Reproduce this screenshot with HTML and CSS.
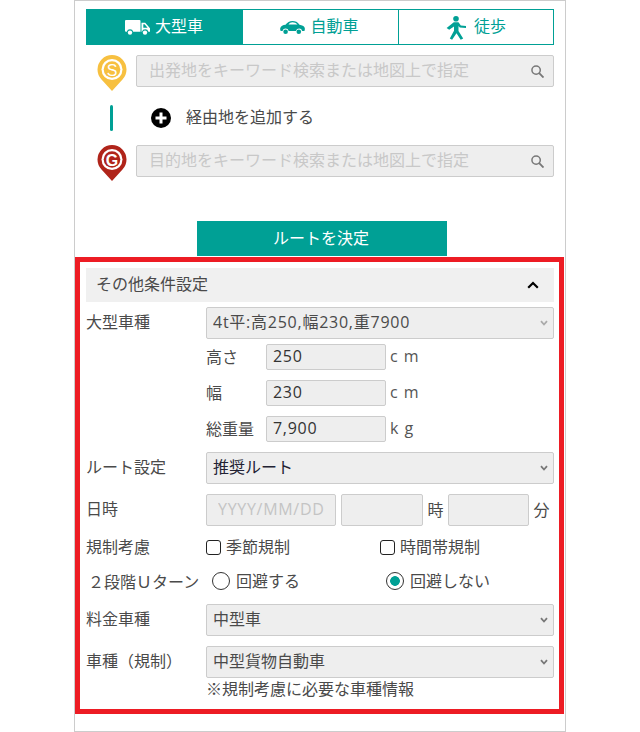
FILE: index.html
```html
<!DOCTYPE html>
<html lang="ja">
<head>
<meta charset="utf-8">
<title>ルート検索</title>
<link rel="stylesheet" href="styles.css">
</head>
<body>
<main class="panel">
  <div class="search">
    <nav class="tabs">
      <a class="tab tab-active">
        <svg class="ico-truck" viewBox="0 0 25 15"><path fill="currentColor" d="M1 0h13.500a1 1 0 0 1 1 1v10.800H8.200a3.300 3.300 0 0 0-6.400 0H1a1 1 0 0 1-1-1V1a1 1 0 0 1 1-1z"/><path fill="currentColor" fill-rule="evenodd" d="M16.500 2.800h3.700l4.800 5.400v3.600h-1.600a3.300 3.300 0 0 0-6.400 0h-.5zM18.300 4.200v3.600h4.300l-3-3.600z"/><circle fill="currentColor" cx="5" cy="12.600" r="2.200"/><circle fill="currentColor" cx="20" cy="12.600" r="2.200"/></svg>
        <span>大型車</span>
      </a>
      <a class="tab tab-mid">
        <svg class="ico-car" viewBox="0 0 25 14"><path fill="currentColor" fill-rule="evenodd" d="M.3 7C.8 5 3 4.100 5.500 3.800 7.300 1.300 9.500 0 12.500 0c3 0 5 1 7 3.700 2.500.4 4.500 1.200 5.200 3 .3 1 .2 2.500-.3 3.300h-2.200a3.200 3.200 0 0 0-6.200 0H8.700a3.200 3.200 0 0 0-6.200 0H.8C.2 9.300 0 8 .3 7zM8.500 3.600h9C16 2 14.500 1.300 12.500 1.300 10.900 1.300 9.500 2 8.500 3.600z"/><circle fill="currentColor" cx="5.600" cy="10.800" r="2.300"/><circle fill="currentColor" cx="18.800" cy="10.800" r="2.300"/></svg>
        <span>自動車</span>
      </a>
      <a class="tab tab-walk">
        <svg class="ico-walk" viewBox="0 0 20 24"><circle fill="currentColor" cx="10" cy="2.800" r="2.800"/><path fill="currentColor" d="M7.800 6.300h4.700l2.300 3.200 5.200.5v2l-6.200-.6-1.300-1.500v5l4.700 7.500-2.500 1.300-4.200-6.500-4.400 6.600-2.300-1.400 4.200-7.600V10.500l-4.800 3.300L.6 12z"/></svg>
        <span>徒歩</span>
      </a>
    </nav>

    <div class="place place-start">
      <svg class="pin" viewBox="0 0 30 36"><path fill="#f7c040" d="M15 36 4.500 24.500A14.500 14.500 0 1 1 25.500 24.500z"/><circle cx="15" cy="14.500" r="10.500" fill="#fff"/><circle cx="15" cy="14.500" r="8.300" fill="#f7c040"/><text x="15" y="20.500" class="pin-letter">S</text></svg>
      <div class="field">
        <input class="field-input" placeholder="出発地をキーワード検索または地図上で指定" disabled>
        <svg class="ico-search" viewBox="0 0 14 14"><circle cx="5.500" cy="5.500" r="4.500" fill="none" stroke="#777" stroke-width="1.600"/><path d="m8.800 8.800 4.700 4.700" stroke="#777" stroke-width="2"/></svg>
      </div>
    </div>

    <div class="via">
      <span class="via-bar"></span>
      <svg class="ico-plus" viewBox="0 0 20 20"><circle cx="10" cy="10" r="10" fill="#000"/><path d="M10 4.500v11M4.500 10h11" stroke="#fff" stroke-width="3"/></svg>
      <span class="via-text">経由地を追加する</span>
    </div>

    <div class="place place-goal">
      <svg class="pin" viewBox="0 0 30 36"><path fill="#b0241a" d="M15 36 4.500 24.500A14.500 14.500 0 1 1 25.500 24.500z"/><circle cx="15" cy="14.500" r="10.500" fill="#fff"/><circle cx="15" cy="14.500" r="8.300" fill="#b0241a"/><text x="15" y="20.500" class="pin-letter">G</text></svg>
      <div class="field">
        <input class="field-input" placeholder="目的地をキーワード検索または地図上で指定" disabled>
        <svg class="ico-search" viewBox="0 0 14 14"><circle cx="5.500" cy="5.500" r="4.500" fill="none" stroke="#777" stroke-width="1.600"/><path d="m8.800 8.800 4.700 4.700" stroke="#777" stroke-width="2"/></svg>
      </div>
    </div>

    <button class="decide" type="button">ルートを決定</button>
  </div>

  <section class="conditions">
    <header class="cond-head">
      <span>その他条件設定</span>
      <svg class="ico-up" viewBox="0 0 12 8"><path d="M1.200 6.800 6 2l4.800 4.800" fill="none" stroke="#000" stroke-width="2.200"/></svg>
    </header>

    <div class="row row-first">
      <label class="row-label">大型車種</label>
      <div class="select-wrap">
        <select class="select select-latin"><option>4t平:高250,幅230,重7900</option></select>
        <svg class="ico-down ico-down-light" viewBox="0 0 8 6"><path d="M1 1.200 4 4.500l3-3.300" fill="none" stroke="currentColor" stroke-width="1.800"/></svg>
      </div>
    </div>

    <div class="size-list">
      <div class="size"><span class="size-label">高さ</span><input class="size-input" value="250"><span class="unit">c m</span></div>
      <div class="size"><span class="size-label">幅</span><input class="size-input" value="230"><span class="unit">c m</span></div>
      <div class="size"><span class="size-label">総重量</span><input class="size-input" value="7,900"><span class="unit">k g</span></div>
    </div>

    <div class="row row-route">
      <label class="row-label">ルート設定</label>
      <div class="select-wrap">
        <select class="select select-route"><option>推奨ルート</option></select>
        <svg class="ico-down" viewBox="0 0 8 6"><path d="M1 1.200 4 4.500l3-3.300" fill="none" stroke="currentColor" stroke-width="1.800"/></svg>
      </div>
    </div>

    <div class="row row-date">
      <label class="row-label">日時</label>
      <div class="date-fields">
        <input class="date-input date-day" placeholder="YYYY/MM/DD" disabled>
        <input class="date-input date-hour" disabled><span class="date-unit">時</span>
        <input class="date-input date-min" disabled><span class="date-unit">分</span>
      </div>
    </div>

    <div class="row row-check">
      <label class="row-label">規制考慮</label>
      <div class="choices">
        <label class="choice"><input class="check" type="checkbox"><span class="choice-text">季節規制</span></label>
        <label class="choice"><input class="check" type="checkbox"><span class="choice-text">時間帯規制</span></label>
      </div>
    </div>

    <div class="row row-radio">
      <label class="row-label row-label-u">２段階Ｕターン</label>
      <div class="choices choices-radio">
        <label class="choice"><span class="radio"></span><span class="choice-text">回避する</span></label>
        <label class="choice"><span class="radio radio-on"></span><span class="choice-text">回避しない</span></label>
      </div>
    </div>

    <div class="row row-fare">
      <label class="row-label">料金車種</label>
      <div class="select-wrap">
        <select class="select"><option>中型車</option></select>
        <svg class="ico-down" viewBox="0 0 8 6"><path d="M1 1.200 4 4.500l3-3.300" fill="none" stroke="currentColor" stroke-width="1.800"/></svg>
      </div>
    </div>

    <div class="row row-reg">
      <label class="row-label">車種（規制）</label>
      <div class="select-wrap">
        <select class="select"><option>中型貨物自動車</option></select>
        <svg class="ico-down" viewBox="0 0 8 6"><path d="M1 1.200 4 4.500l3-3.300" fill="none" stroke="currentColor" stroke-width="1.800"/></svg>
      </div>
    </div>
    <p class="note">※規制考慮に必要な車種情報</p>
  </section>
</main>
</body>
</html>
```

FILE: styles.css
```css
* { box-sizing: border-box; }
html, body { margin: 0; padding: 0; background: #fff; }
body {
  font-family: "Open Sans", "Noto Sans CJK JP", sans-serif;
  font-size: 16px;
  color: #4a4a4a;
}
.panel {
  width: 492px;
  height: 732px;
  margin-left: 74px;
  border: 1px solid #ccc;
  overflow: hidden;
}
.search { padding: 8px 11px 0; height: 256px; }

.tabs { display: flex; height: 36px; border: 1px solid #00a095; }
.tab {
  display: flex;
  align-items: center;
  justify-content: center;
  color: #00a095;
  font-size: 16px;
  flex: 1 1 0;
}
.tab span { margin-top: -4px; }
.tab-active { flex: 0 0 156px; background: #00a095; color: #fff; gap: 5px; padding-right: 2px; }
.tab-mid { flex: 0 0 156px; border-right: 1px solid #00a095; gap: 5px; padding-right: 2px; }
.tab-walk { gap: 8px; }
.ico-truck { width: 25px; height: 15px; margin-top: 1px; }
.ico-car { width: 25px; height: 14px; margin-top: 1px; }
.ico-walk { width: 20px; height: 24px; margin-top: 2px; }

.place { display: flex; align-items: center; gap: 9px; height: 36px; padding-left: 11px; }
.place-start { margin-top: 10px; }
.place-goal { margin-top: 14px; }
.pin { width: 30px; height: 36px; flex: none; }
.pin-letter {
  font-family: "Liberation Sans", sans-serif;
  font-size: 16px;
  font-weight: 700;
  fill: #fff;
  text-anchor: middle;
}
.place-start .pin-letter { font-weight: 400; }
.field { position: relative; flex: 1; height: 32px; margin-top: -4px; }
.field-input {
  width: 100%;
  height: 32px;
  padding: 0 30px 2px 12px;
  border: 1px solid #ccc;
  border-radius: 2px;
  background: #eee;
  font: inherit;
}
.field-input::placeholder { color: #c8c8c8; opacity: 1; }
.ico-search { position: absolute; right: 10px; top: 10px; width: 13px; height: 13px; }

.via { display: flex; align-items: center; height: 26px; margin-top: 14px; padding-left: 24px; }
.via-bar { width: 3px; height: 26px; border-radius: 2px; background: #00a095; }
.ico-plus { width: 20px; height: 20px; margin-left: 38px; }
.via-text { margin-left: 15px; margin-top: -4px; color: #4a4a4a; }

.decide {
  display: block;
  width: 250px;
  height: 35px;
  margin: 40px 0 0 111px;
  border: 0;
  background: #00a095;
  color: #fff;
  font: inherit;
  padding: 0 2px 4px 0;
}

.conditions {
  height: 457px;
  margin-right: 1px;
  border: 5px solid #ed1c24;
  padding: 6px 5px 0 6px;
}
.cond-head {
  display: flex;
  align-items: center;
  justify-content: space-between;
  height: 34px;
  padding: 0 15px 5px 10px;
  background: #f0f0f0;
}
.ico-up { width: 12px; height: 8px; margin-top: 5px; }

.row { display: flex; }
.row-label { width: 120px; flex: none; line-height: 30px; color: #4a4a4a; }
.row-first { margin-top: 5px; }
.row-route { margin-top: 10px; }
.row-date { margin-top: 10px; }
.row-check { margin-top: 8px; align-items: center; height: 26px; }
.row-radio { margin-top: 8px; align-items: center; height: 26px; }
.row-fare { margin-top: 10px; }
.row-reg { margin-top: 10px; }
.row-label-u { padding-left: 2px; white-space: nowrap; }
.row-check .row-label { margin-top: 0; }
.row-radio .row-label { margin-top: 2px; }
.choice-text { margin-top: -3px; }

.select-wrap { position: relative; flex: 1; height: 32px; }
.select {
  appearance: none;
  width: 100%;
  height: 32px;
  padding: 0 24px 3px 6px;
  border: 1px solid #ccc;
  border-radius: 2px;
  background: #eee;
  font: inherit;
  color: #4a4a4a;
}
.select-latin { letter-spacing: 0.75px; }
.select-route { color: #223; }
.ico-down { position: absolute; right: 6px; top: 13px; width: 8px; height: 6px; color: #777; pointer-events: none; }
.ico-down-light { color: #aaa; }

.size-list { display: flex; flex-direction: column; gap: 10px; margin-top: 5px; padding-left: 120px; }
.size { display: flex; align-items: center; height: 26px; }
.size-label { width: 60px; flex: none; margin-top: -3px; }
.size-input {
  width: 120px;
  height: 26px;
  padding: 0 6px 2px;
  border: 1px solid #ccc;
  border-radius: 2px;
  background: #eee;
  font: inherit;
  letter-spacing: 0.7px;
  color: #333;
}
.unit { margin-left: 4px; margin-top: -3px; color: #555; letter-spacing: 1px; }

.date-fields { display: flex; align-items: center; flex: 1; height: 32px; }
.date-input {
  height: 32px;
  border: 1px solid #ccc;
  border-radius: 2px;
  background: #eee;
  font: inherit;
  padding: 0 11px 2px;
}
.date-day { letter-spacing: 0.7px; }
.date-input::placeholder { color: #c4c4c4; opacity: 1; }
.date-day { width: 130px; }
.date-hour { width: 82px; margin-left: 5px; }
.date-min { width: 81px; }
.date-unit { width: 25px; flex: none; text-align: center; margin-top: -3px; }

.choices { display: grid; grid-template-columns: 174px 1fr; flex: 1; }
.choices-radio { padding-left: 6px; }
.choice { display: flex; align-items: center; color: #4a4a4a; }
.check {
  appearance: none;
  width: 15px;
  height: 15px;
  margin: 0 5px 0 0;
  border: 1px solid #222;
  border-radius: 3px;
  background: #fff;
}
.radio {
  width: 18px;
  height: 18px;
  margin-right: 6px;
  border: 1px solid #333;
  border-radius: 50%;
  background: #fff;
}
.radio-on { background: radial-gradient(circle, #00a095 0 4.500px, #fff 5.200px); }
.note { margin: 0; padding-left: 120px; line-height: 22px; color: #4a4a4a; }
```
